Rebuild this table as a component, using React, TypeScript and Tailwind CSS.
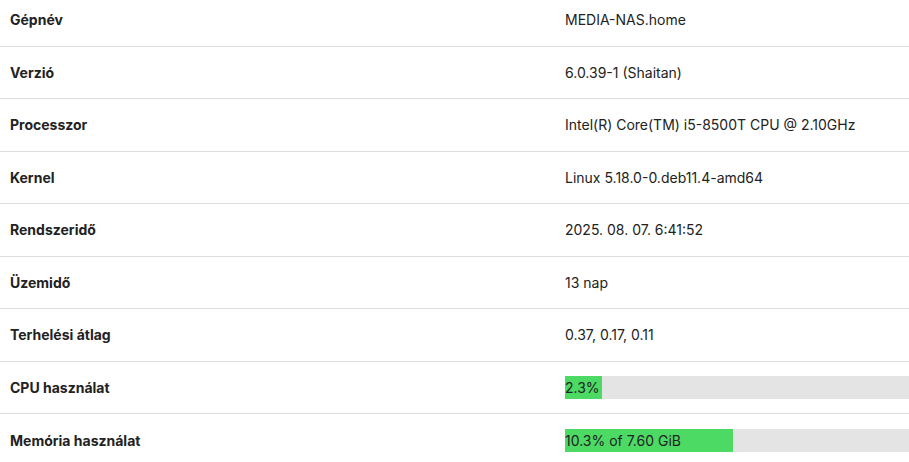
import React from "react";

const rows: { label: string; value: React.ReactNode }[] = [
  { label: "Gépnév", value: "MEDIA-NAS.home" },
  { label: "Verzió", value: "6.0.39-1 (Shaitan)" },
  { label: "Processzor", value: "Intel(R) Core(TM) i5-8500T CPU @ 2.10GHz" },
  { label: "Kernel", value: "Linux 5.18.0-0.deb11.4-amd64" },
  { label: "Rendszeridő", value: "2025. 08. 07. 6:41:52" },
  { label: "Üzemidő", value: "13 nap" },
  { label: "Terhelési átlag", value: "0.37, 0.17, 0.11" },
];

function Bar({ text, width }: { text: string; width: number }) {
  return (
    <div className="relative h-[23px] w-full bg-[#e4e4e4]">
      <div className="h-full bg-[#4cd964]" style={{ width }} />
      <span className="absolute left-0 top-0 flex h-full items-center whitespace-nowrap text-[14px] text-[#222]">
        {text}
      </span>
    </div>
  );
}

export default function App() {
  const all = [
    ...rows,
    { label: "CPU használat", value: <Bar text="2.3%" width={37} /> },
    { label: "Memória használat", value: <Bar text="10.3% of 7.60 GiB" width={168} /> },
  ];
  return (
    <div className="h-[462px] w-[909px] overflow-hidden bg-white font-['Inter',sans-serif] text-[14px] text-[#222]">
      <div className="-mt-[6px]">
        {all.map((r, i) => (
          <div
            key={i}
            className={`flex h-[52.5px] items-center ${i < all.length - 1 ? "border-b border-[#dddddd]" : ""}`}
          >
            <div className="w-[565px] shrink-0 pl-[10px] font-bold">{r.label}</div>
            <div className="flex-1">{r.value}</div>
          </div>
        ))}
      </div>
    </div>
  );
}
